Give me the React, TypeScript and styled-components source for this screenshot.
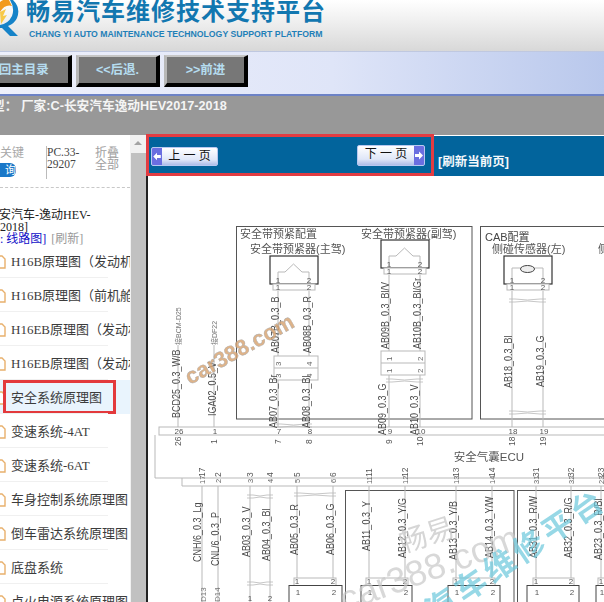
import React from "react";
import styled, { createGlobalStyle } from "styled-components";

const Global = createGlobalStyle`
  html, body { margin: 0; padding: 0; background: #fff; overflow: hidden; }
  * { box-sizing: border-box; }
`;
const sans = `"Liberation Sans", "Noto Sans CJK SC", sans-serif`;
const serif = `"Liberation Serif", "Noto Sans CJK SC", serif`;

const Page = styled.div`width: 604px; height: 602px; overflow: hidden; display: flex; flex-direction: column; font-family: ${sans};`;
const Header = styled.header`
  height: 52px; flex: none; display: flex; gap: 6px; overflow: hidden;
  background: linear-gradient(180deg, #ffffff 0%, #f2f2f2 35%, #d8d8d8 100%);
  border-bottom: 1px solid #bfc8e0;
`;
const LogoMark = styled.svg`width: 20px; height: 37px; flex: none; display: block;`;
const Brand = styled.div`display: flex; flex-direction: column;`;
const BrandTitle = styled.div`font: 700 24px/24px ${sans}; letter-spacing: 1px; color: #1277b0; white-space: nowrap;`;
const BrandSub = styled.div`font: 700 8.7px/10px ${sans}; margin: 5px 0 0 3px; color: #1f80b8; white-space: nowrap;`;
const Nav = styled.nav`
  height: 44px; flex: none; display: flex; gap: 4px; padding-top: 3px; overflow: hidden;
  background: linear-gradient(90deg, #eef0fb 0%, #dfe5f8 55%, #b9c8ec 100%);
  border-bottom: 2px solid #6c82c6;
`;
const NavButton = styled.div<{ $first?: boolean }>`
  width: ${(p) => (p.$first ? "108px" : "84px")}; margin-left: ${(p) => (p.$first ? "-36px" : "0")};
  height: 32px; flex: none; display: flex; align-items: center; justify-content: center;
  background: #777; color: #b5dcef; font: 700 12.5px/1 ${sans};
  border-style: solid; border-width: 2px 4px 4px 3px; border-color: #c6c6c6 #000 #000 #b8b8b8;
`;
const TitleBar = styled.div`
  height: 39px; flex: none; background: #989898; color: #f4f4f4; padding: 2px 0 0 0;
  font: 700 12.7px/16px ${sans}; white-space: pre; overflow: hidden; text-indent: -8px;
`;
const Main = styled.main`flex: 1; min-height: 0; display: flex;`;
const Side = styled.aside`width: 130px; flex: none; overflow: hidden; background: #fff;`;
const Tools = styled.div`height: 53px; display: flex; padding-top: 11px; border-bottom: 1px dashed #c8c8c8;`;
const KeyCol = styled.div`width: 46px; flex: none; padding-top: 1px; color: #a8a8a8; font: 12px/13px ${sans}; white-space: nowrap;`;
const Query = styled.div`
  width: 16px; height: 14px; margin-top: 3px; background: #1a78c8; color: #fff; border-radius: 0 6px 6px 0;
  font: 11px/14px ${sans}; overflow: hidden; text-align: right;
`;
const Code = styled.div`width: 49px; flex: none; height: 33px; border-left: 1px solid #bbb; font: 11.5px/12px ${serif}; color: #444;`;
const Collapse = styled.div`width: 25px; color: #a0a0a0; padding-top: 1px; font: 12px/12px ${sans}; flex: none;`;
const CarTitle = styled.div`padding-top: 21px; height: 56px; font: 12px/12px ${serif}; color: #222; white-space: nowrap;`;
const CarLine = styled.div<{ $clip?: boolean }>`margin-left: ${(p) => (p.$clip ? "-13px" : "0")};`;
const LinkBlue = styled.span`color: #1010c8;`;
const LinkGray = styled.span`color: #999; margin-left: 5px;`;
const Item = styled.div<{ $on?: boolean }>`
  height: 34px; display: flex; align-items: center; position: relative; padding-left: 11px;
  font: 13px/1 ${serif}; color: #3c3c3c; white-space: nowrap;
  &::after { content: ""; position: absolute; left: 0; right: 22px; bottom: 0; height: 1px; background: #f0f0f0; }
  ${(p) => p.$on && `background: #e9f4fd;`}
`;
const FileIcon = styled.svg`position: absolute; left: -6px; top: 11px; width: 12px; height: 14px;`;
const Mark = styled.div`position: absolute; left: 3px; top: 0; width: 113px; height: 34px; border: 3px solid #e3393c;`;
const Scroll = styled.div`width: 16px; flex: none; background: #f1f1f1; display: flex; flex-direction: column; align-items: center;`;
const Arrow = styled.div`margin-top: 6px; width: 0; height: 0; border-left: 4px solid transparent; border-right: 4px solid transparent; border-bottom: 4px solid #a3a3a3;`;
const Thumb = styled.div`margin-top: 8px; flex: 1; width: 15px; background: #c1c1c1;`;
const Viewer = styled.section`flex: 1; min-width: 0; display: flex; flex-direction: column; position: relative; background: #fff;`;
const Toolbar = styled.div`
  height: 40px; flex: none; margin-top: 1px; background: #02649c; display: flex; align-items: flex-start;
  padding: 9px 0 0 5px;
`;
const Annot = styled.div`position: absolute; left: 0; top: -1px; width: 288px; height: 42px; border: 3px solid #e23c42;`;
const PageBtn = styled.div<{ $next?: boolean }>`
  width: ${(p) => (p.$next ? "68px" : "67px")}; height: ${(p) => (p.$next ? "21px" : "19px")};
  margin: ${(p) => (p.$next ? "0 0 0 139px" : "2px 0 0 0")}; flex: none;
  display: flex; flex-direction: ${(p) => (p.$next ? "row-reverse" : "row")}; overflow: hidden;
  border: 1px solid #b8c8f0; border-radius: 2px; background: linear-gradient(180deg, #fff, #dfe6f8 70%, #aebde8);
`;
const PageArrow = styled.svg`width: 10px; height: 100%; flex: none; background: #6a6ee0; display: block;`;
const PageLabel = styled.div`flex: 1; text-align: center; font: 12px/17px ${sans}; color: #111;`;
const Refresh = styled.div`margin: 9px 0 0 13px; font: 700 12.5px/16px ${sans}; color: #f4f8fb; white-space: nowrap;`;
const DiagramWrap = styled.div`flex: 1; min-height: 0; border-left: 2px solid #222; overflow: hidden;`;
const Diagram = styled.svg`display: block; width: 456px; height: 426px; filter: blur(0.4px);`;

const LC = "#b9b9b9";
const TC = "#4a4a4a";
const ln = (x1: number, y1: number, x2: number, y2: number, c = LC, w = 1) => (
  <line key={`${x1}-${y1}-${x2}-${y2}`} x1={x1} y1={y1} x2={x2} y2={y2} stroke={c} strokeWidth={w} />
);
const VText = ({ x, y, t, s = 11, c = TC, k = 0.82 }: { x: number; y: number; t: string; s?: number; c?: string; k?: number }) => (
  <text transform={`translate(${x} ${y}) rotate(-90) scale(${k} 1)`} fontFamily={sans} fontSize={s} fill={c}>{t}</text>
);
const HText = ({ x, y, t, s = 8, c = "#555", a = "middle" }: { x: number; y: number; t: string; s?: number; c?: string; a?: "start" | "middle" }) => (
  <text x={x} y={y} textAnchor={a} fontFamily={sans} fontSize={s} fill={c}>{t}</text>
);

const upperPins: [string, number][] = [["26", 178], ["1", 214], ["7", 278], ["8", 309], ["9", 389], ["10", 420], ["18", 512], ["19", 543]];
const lowerPins: [string, number][] = [["17", 202], ["2", 218], ["3", 250], ["4", 270], ["5", 297], ["6", 333], ["11", 369], ["12", 405], ["13", 456], ["14", 492], ["31", 536], ["32", 571], ["23", 601]];
const upperLabels: [string, number, number][] = [
  ["BCD25_0.3_W/B", 180, 418], ["IGA02_0.5_V", 216, 416], ["AB07B_0.3_B", 279, 353], ["AB08B_0.3_R", 311, 353],
  ["AB07_0.3_Br", 277, 428], ["AB08_0.3_Bl", 310, 428], ["AB09B_0.3_Bl/V", 389, 349], ["AB10B_0.3_Bl/Gr", 421, 349],
  ["AB09_0.3_G", 386, 435], ["AB10_0.3_V", 418, 435], ["AB18_0.3_Bl", 512, 388], ["AB19_0.3_G", 544, 387],
];
const lowerLabels: [string, number, number][] = [
  ["CNH/6_0.3_Lg", 201, 562], ["CNL/6_0.3_P", 219, 566], ["AB03_0.3_V", 250, 557], ["AB04_0.3_Bl", 270, 561],
  ["AB05_0.3_R", 298, 555], ["AB06_0.3_G", 334, 555], ["AB11_0.3_Y", 370, 551], ["AB12_0.3_Y/G", 406, 558],
  ["AB13_0.3_Y/B", 457, 560], ["AB14_0.3_Y/W", 493, 558], ["AB31_0.3_R/W", 537, 558], ["AB32_0.3_R/G", 572, 558], ["AB23_0.3_R/Bl", 602, 560],
];
const bottomBoxes: [number, number, string, number, string, number][] = [
  [289, 342, "1", 297, "2", 333], [361, 412, "1", 369, "2", 405], [448, 500, "1", 456, "2", 492], [527, 579, "1", 536, "2", 571], [596, 640, "1", 601, "2", 640],
];
const topConnectors: [number, number, number, number, number][] = [[270, 256, 278, 309, 0], [381, 240, 389, 420, 0], [504, 256, 512, 543, 1]];
const joints: [number, number, number, number, string, string][] = [[274, 356, 278, 309, "3", "4"], [381, 351, 389, 420, "1", "2"]];

const Schematic = () => (
  <Diagram viewBox="148 176 456 426">
    <g fill="none">
      <rect x="236.5" y="226.5" width="235.5" height="192.5" stroke="#555" strokeWidth="1" />
      <rect x="480.5" y="226.5" width="140" height="192.5" stroke="#555" strokeWidth="1" />
      <rect x="159" y="427" width="460" height="8" stroke={LC} />
      <path d="M155 435V478H620" stroke={LC} />
      <path d="M182 478V486H620" stroke={LC} />
      <rect x="345.5" y="490.5" width="168.5" height="130" stroke="#555" />
      <rect x="517.5" y="490.5" width="110" height="130" stroke="#555" />
    </g>
    {[178, 214].map((x) => ln(x, 345, x, 427))}
    {[278, 309].map((x) => ln(x, 291, x, 356))}
    {[278, 309].map((x) => ln(x, 380, x, 427))}
    {[389, 420].map((x) => ln(x, 275, x, 351))}
    {[389, 420].map((x) => ln(x, 375, x, 427))}
    {[512, 543].map((x) => ln(x, 291, x, 427))}
    {lowerPins.map(([, x]) => ln(x, 486, x, 602))}
    {[[250, 270, 495], [250, 270, 582], [297, 333, 493], [278, 309, 424], [389, 420, 379], [512, 543, 299], [512, 543, 411]].map(([a, b, y]) => (
      <path key={`${a}-${y}`} d={`M${a - 3} ${y}H${a + 3}Q${(a + b) / 2} ${y + 2} ${b - 3} ${y}H${b + 3}M${a - 3} ${y + 3}H${a + 3}Q${(a + b) / 2} ${y + 1} ${b - 3} ${y + 3}H${b + 3}`} fill="none" stroke={LC} strokeWidth=".8" />
    ))}
    {topConnectors.map(([x, y, a, b, oval]) => (
      <g key={x} fill="none">
        <rect x={x} y={y} width="48" height="28" stroke="#333" strokeWidth="1.2" fill="#fff" />
        <rect x={x + 3} y={y + 28} width="42" height="6" stroke={LC} fill="#fff" />
        {oval ? (
          <path d={`M${a} ${y + 26}V${y + 12}H${b}V${y + 26}`} stroke={LC} />
        ) : (
          <path d={`M${a} ${y + 26}V${y + 16}H${a + 7}L${(a + b) / 2} ${y + 8}L${b - 7} ${y + 16}H${b}V${y + 26}`} stroke={LC} />
        )}
        {oval ? <ellipse cx={(a + b) / 2} cy={y + 13} rx="7" ry="3.5" stroke="#444" fill="#eee" /> : null}
        <HText x={a} y={y + 27} t="1" />
        <HText x={b} y={y + 27} t="2" />
        <HText x={a} y={y + 34} t="1" />
        <HText x={b} y={y + 34} t="2" />
      </g>
    ))}
    {joints.map(([x, y, a, b, l, r]) => (
      <g key={x}>
        <rect x={x} y={y} width="44" height="24" fill="#fff" stroke={LC} />
        {ln(x, y + 12, x + 44, y + 12)}
        <VText x={a + 3} y={y + 10} t={l} s={8} c="#666" k={1} />
        <VText x={b + 3} y={y + 10} t={r} s={8} c="#666" k={1} />
        <VText x={a + 3} y={y + 22} t={l} s={8} c="#666" k={1} />
        <VText x={b + 3} y={y + 22} t={r} s={8} c="#666" k={1} />
      </g>
    ))}
    {bottomBoxes.map(([l, r, a, ax, b, bx]) => (
      <g key={l}>
        <rect x={ax - 3} y="578" width={bx - ax + 6} height="8" fill="#fff" stroke={LC} />
        <rect x={l} y="585.5" width={r - l} height="30" fill="#fff" stroke="#444" />
        <HText x={ax} y="584" t={a} s={8} />
        <HText x={bx} y="584" t={b} s={8} />
        <HText x={ax + 1} y="595" t={a} s={8} />
        <HText x={bx + 1} y="595" t={b} s={8} />
      </g>
    ))}
    {upperLabels.map(([t, x, y]) => <VText key={t} x={x} y={y} t={t} />)}
    {lowerLabels.map(([t, x, y]) => <VText key={t} x={x} y={y} t={t} />)}
    <VText x={181} y={345} t="接BCM-D25" s={7} c="#777" k={1} />
    <VText x={217} y={345} t="接DF22" s={7} c="#777" k={1} />
    <VText x={206} y={602} t="D13" s={8} c="#777" k={1} />
    <VText x={220} y={602} t="D14" s={8} c="#777" k={1} />
    <HText x={250} y={601} t="1" />
    <HText x={270} y={601} t="2" />
    {upperPins.map(([t, x]) => (
      <g key={t}>
        <HText x={x + 1} y={434} t={t} s={8} />
        <VText x={x + 3} y={t.length > 1 ? 446 : 444} t={t} s={8.5} c="#555" k={1} />
      </g>
    ))}
    {lowerPins.map(([t, x]) => (
      <g key={t}>
        <VText x={x + 3} y={t.length > 1 ? 484 : 483} t={t} s={7.5} c="#666" k={1} />
        <VText x={x + 3} y={477} t={t} s={8.5} c="#555" k={1} />
      </g>
    ))}
    <HText x={240} y={238} t="安全带预紧配置" s={11} a="start" />
    <HText x={250} y={253} t="安全带预紧器(主驾)" s={11} a="start" />
    <HText x={361} y={238} t="安全带预紧器(副驾)" s={11} a="start" />
    <HText x={485} y={241} t="CAB配置" s={11} c="#444" a="start" />
    <HText x={492} y={253} t="侧碰传感器(左)" s={11} a="start" />
    <HText x={598} y={253} t="侧" s={11} a="start" />
    <HText x={489} y={461} t="安全气囊ECU" s={11.5} />
    <text transform="translate(190 385) rotate(-29)" fontFamily={sans} fontWeight="700" fontSize="22" fill="#d9a675" stroke="#9a9a9a" strokeWidth=".4" opacity=".85">car388.com</text>
    <text transform="translate(403 553) rotate(-18)" fontFamily={sans} fontSize="28" fill="#c8c8c8" opacity=".75">畅易</text>
    <text transform="translate(345 612) rotate(-20)" fontFamily={sans} fontSize="36" fill="#c8c8c8" opacity=".7">car388.com</text>
    <text transform="translate(377 662) rotate(-34)" fontFamily={sans} fontWeight="700" fontSize="31" letterSpacing="4" fill="#6cc8dc" opacity=".7">畅易汽车维修平台</text>
  </Diagram>
);

const items = ["H16B原理图（发动机舱）", "H16B原理图（前机舱）", "H16EB原理图（发动机）", "H16EB原理图（发动机）", "安全系统原理图", "变速系统-4AT", "变速系统-6AT", "车身控制系统原理图", "倒车雷达系统原理图", "底盘系统", "点火电源系统原理图"];

export default function App() {
  return (
    <Page>
      <Global />
      <Header>
        <LogoMark viewBox="0 0 20 37">
          <path d="M0 2Q5 -2 9 0L12 6Q5 4 0 12Z" fill="#f29a1f" />
          <path d="M0 12L6 9L3 16L7 15L1 24Z" fill="#f7c948" />
          <path d="M13 0Q21 8 17 18Q15 23 8 26L18 36H10L2 28H0V25Q8 24 12 16Q15 8 10 0Z" fill="#1683c8" />
        </LogoMark>
        <Brand>
          <BrandTitle>畅易汽车维修技术支持平台</BrandTitle>
          <BrandSub>CHANG YI AUTO MAINTENANCE TECHNOLOGY SUPPORT PLATFORM</BrandSub>
        </Brand>
      </Header>
      <Nav>
        <NavButton $first>返回主目录</NavButton>
        <NavButton>&lt;&lt;后退.</NavButton>
        <NavButton>&gt;&gt;前进</NavButton>
      </Nav>
      <TitleBar>{"型： 厂家:C-长安汽车逸动HEV2017-2018"}</TitleBar>
      <Main>
        <Side>
          <Tools>
            <KeyCol>
              关键
              <Query>询</Query>
            </KeyCol>
            <Code>PC.33-<br />29207</Code>
            <Collapse>折叠<br />全部</Collapse>
          </Tools>
          <CarTitle>
            <CarLine $clip>长安汽车-逸动HEV-</CarLine>
            <CarLine>2018]</CarLine>
            <CarLine><LinkBlue>: 线路图]</LinkBlue><LinkGray>[刷新]</LinkGray></CarLine>
          </CarTitle>
          {items.map((t, i) => (
            <Item key={i} $on={i === 4}>
              <FileIcon viewBox="0 0 12 14">
                <path d="M1 1H8L11 4V13H1Z" fill="#fff" stroke="#e8b06c" strokeWidth="1.4" />
              </FileIcon>
              {t}
              {i === 4 ? <Mark /> : null}
            </Item>
          ))}
        </Side>
        <Scroll>
          <Arrow />
          <Thumb />
        </Scroll>
        <Viewer>
          <Toolbar>
            <PageBtn>
              <PageArrow viewBox="0 0 10 18"><path d="M1 9L5 5V7.5H9V10.5H5V13Z" fill="#fff" /></PageArrow>
              <PageLabel>上 一 页</PageLabel>
            </PageBtn>
            <PageBtn $next>
              <PageArrow viewBox="0 0 10 18"><path d="M9 9L5 5V7.5H1V10.5H5V13Z" fill="#fff" /></PageArrow>
              <PageLabel>下 一 页</PageLabel>
            </PageBtn>
            <Refresh>[刷新当前页]</Refresh>
          </Toolbar>
          <Annot />
          <DiagramWrap><Schematic /></DiagramWrap>
        </Viewer>
      </Main>
    </Page>
  );
}
